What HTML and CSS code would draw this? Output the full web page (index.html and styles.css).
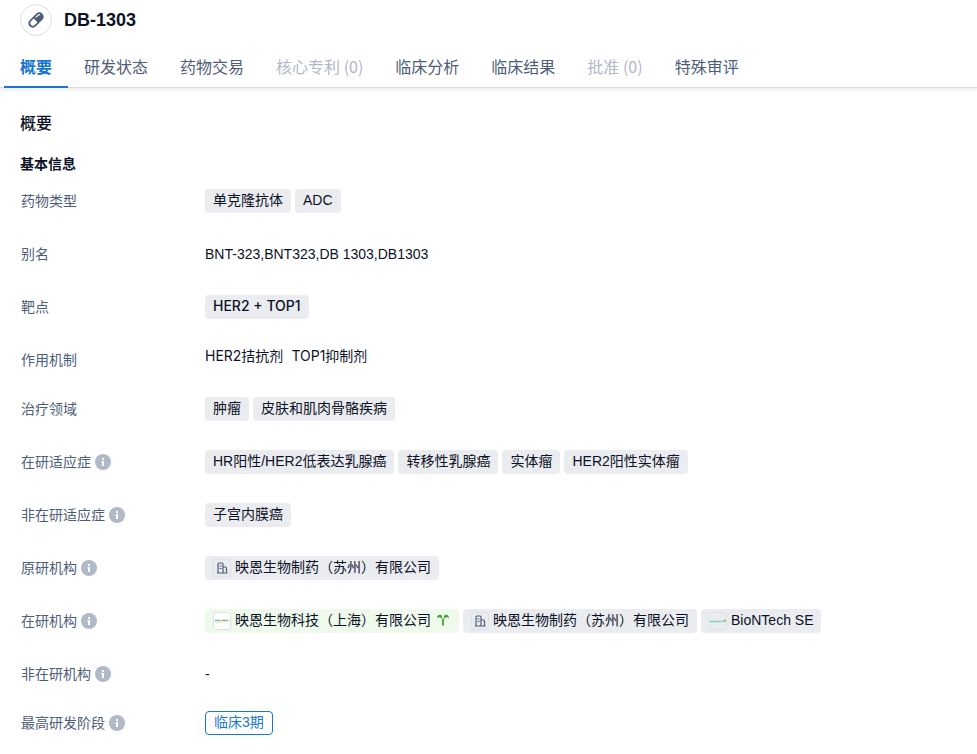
FILE: index.html
```html
<!DOCTYPE html>
<html lang="zh-CN">
<head>
  <meta charset="UTF-8">
  <meta name="viewport" content="width=device-width, initial-scale=1.0">
  <title>DB-1303</title>
  <link rel="stylesheet" href="styles.css">
</head>
<body>
  <svg class="sprite" aria-hidden="true">
    <symbol id="icon-info" viewBox="0 0 16 16">
      <circle cx="8" cy="8" r="8" fill="#b1b8c7"/>
      <path d="M7 4h2v2H7zM6.500 7H9v5H7V8.500h-.5z" fill="#fff"/>
    </symbol>
    <symbol id="icon-building" viewBox="0 0 16 16">
      <path d="M4 13V4q0-1 1-1h3q1 0 1 1v9M9 7h2.500q1 0 1 1v5M3 13h10.500" fill="none" stroke="#4e5d78" stroke-width="1.200"/>
      <path d="M5.500 6h2M5.500 8.500h2" stroke="#4e5d78"/>
    </symbol>
  </svg>

  <header class="header">
    <span class="avatar">
      <svg width="18" height="18" viewBox="0 0 18 18">
        <g transform="rotate(-45 9 9)">
          <rect x="0" y="4.600" width="18" height="8.800" rx="4.400" fill="#4e5d78"/>
          <path d="M8.400 6.400H4.600a2.600 2.600 0 0 0 0 5.200h3.800z" fill="#fff"/>
          <path d="M11 7h2.600q1.200 0 1.900 1" fill="none" stroke="#fff" stroke-width="1.100" stroke-linecap="round"/>
        </g>
      </svg>
    </span>
    <h1>DB-1303</h1>
  </header>

  <nav class="tabs">
    <a href="#overview" class="tab active">概要</a>
    <a href="#status" class="tab">研发状态</a>
    <a href="#deals" class="tab">药物交易</a>
    <a href="#patents" class="tab disabled">核心专利 (0)</a>
    <a href="#analysis" class="tab">临床分析</a>
    <a href="#results" class="tab">临床结果</a>
    <a href="#approval" class="tab disabled">批准 (0)</a>
    <a href="#review" class="tab">特殊审评</a>
  </nav>

  <main class="content" id="overview">
    <h2>概要</h2>
    <h3>基本信息</h3>

    <dl class="info">
      <div class="row">
        <dt>药物类型</dt>
        <dd class="tags"><span class="tag">单克隆抗体</span><span class="tag">ADC</span></dd>
      </div>
      <div class="row">
        <dt>别名</dt>
        <dd class="alias">BNT-323,BNT323,DB 1303,DB1303</dd>
      </div>
      <div class="row">
        <dt>靶点</dt>
        <dd class="tags"><a href="#target" class="tag target">HER2 + TOP1</a></dd>
      </div>
      <div class="row">
        <dt>作用机制</dt>
        <dd class="mechanism"><span>HER2拮抗剂</span><span>TOP1抑制剂</span></dd>
      </div>
      <div class="row">
        <dt>治疗领域</dt>
        <dd class="tags"><span class="tag">肿瘤</span><span class="tag">皮肤和肌肉骨骼疾病</span></dd>
      </div>
      <div class="row">
        <dt>在研适应症<svg class="info-icon"><use href="#icon-info"/></svg></dt>
        <dd class="tags">
          <a href="#disease" class="tag">HR阳性/HER2低表达乳腺癌</a>
          <a href="#disease" class="tag">转移性乳腺癌</a>
          <a href="#disease" class="tag">实体瘤</a>
          <a href="#disease" class="tag">HER2阳性实体瘤</a>
        </dd>
      </div>
      <div class="row">
        <dt>非在研适应症<svg class="info-icon"><use href="#icon-info"/></svg></dt>
        <dd class="tags"><a href="#disease" class="tag">子宫内膜癌</a></dd>
      </div>
      <div class="row">
        <dt>原研机构<svg class="info-icon"><use href="#icon-info"/></svg></dt>
        <dd class="tags">
          <a href="#org" class="tag"><span class="logo"><svg><use href="#icon-building"/></svg></span>映恩生物制药（苏州）有限公司</a>
        </dd>
      </div>
      <div class="row">
        <dt>在研机构<svg class="info-icon"><use href="#icon-info"/></svg></dt>
        <dd class="tags">
          <a href="#org" class="tag startup">
            <span class="logo white">
              <svg viewBox="0 0 16 16">
                <path d="M1 7.500h5M9 7.500h5.500" stroke="#62b583" stroke-width="1.500" stroke-dasharray="2.200 .3"/>
                <path d="M6.200 7.500h2.600" stroke="#d9b36a" stroke-width="1.500"/>
                <path d="M1.500 9.700h7" stroke="#c5cacf" stroke-width=".8" stroke-dasharray="1 .6"/>
              </svg>
            </span>映恩生物科技（上海）有限公司
            <svg class="sprout" viewBox="0 0 12 12">
              <path d="M6 11.500V5" stroke="#3da32b" stroke-width="1.800"/>
              <path d="M5.200 6Q5.800 .6 2.600 .8Q.3 1 0 4.200Q1.500 2.900 3 3.300Q4.600 3.700 5.200 6zM6.800 6Q6.200 .6 9.400 .8Q11.700 1 12 4.200Q10.500 2.900 9 3.300Q7.400 3.700 6.800 6z" fill="#3da32b"/>
            </svg>
          </a>
          <a href="#org" class="tag"><span class="logo"><svg><use href="#icon-building"/></svg></span>映恩生物制药（苏州）有限公司</a>
          <a href="#org" class="tag">
            <span class="logo">
              <svg viewBox="0 0 16 16">
                <path d="M0 8.500h13.500" stroke="#79cdb4" stroke-width="1.500" stroke-dasharray="1.800 .3"/>
                <path d="M13.500 6.500h2.500v2.500h-2.500z" fill="#8fd45c"/>
              </svg>
            </span>BioNTech SE
          </a>
        </dd>
      </div>
      <div class="row">
        <dt>非在研机构<svg class="info-icon"><use href="#icon-info"/></svg></dt>
        <dd>-</dd>
      </div>
      <div class="row">
        <dt>最高研发阶段<svg class="info-icon"><use href="#icon-info"/></svg></dt>
        <dd class="tags"><span class="tag phase">临床3期</span></dd>
      </div>
    </dl>
  </main>
</body>
</html>
```

FILE: styles.css
```css
* {
  margin: 0;
  padding: 0;
  box-sizing: border-box;
}

body {
  background-color: #fff;
  color: #0c1226;
  font-family: "Liberation Sans", "Noto Sans CJK SC", sans-serif;
  font-size: 14px;
  line-height: 24px;
}

a {
  color: inherit;
  text-decoration: none;
}

.sprite {
  display: none;
}

.header {
  display: flex;
  align-items: center;
  gap: 12px;
  padding: 4px 20px 0;
}

.avatar {
  display: flex;
  align-items: center;
  justify-content: center;
  width: 32px;
  height: 32px;
  border: 1px solid #dcdfe8;
  border-radius: 50%;
}

.header h1 {
  font-size: 18px;
  line-height: 32px;
}

.tabs {
  display: flex;
  padding: 12px 4px 0;
  border-bottom: 1px solid #dedede;
  box-shadow: 0 2px 4px rgba(0, 0, 0, 0.08);
  font-family: "Noto Sans CJK SC", sans-serif;
}

.tab {
  height: 40px;
  margin-bottom: -1px;
  padding: 0 16px;
  border-bottom: 2px solid transparent;
  color: #4e5d78;
  font-size: 16px;
  line-height: 36px;
  white-space: nowrap;
}

.tab.active {
  border-bottom-color: #1976d2;
  color: #1976d2;
  font-weight: bold;
}

.tab.disabled {
  color: #b1b8c7;
}

.content {
  padding: 24px 20px;
}

.content h2 {
  font-size: 16px;
  font-weight: 500;
  line-height: 24px;
}

.content h3 {
  margin-top: 16px;
  font-size: 14px;
  line-height: 24px;
}

.info {
  display: flex;
  flex-direction: column;
  gap: 25px;
  margin-top: 13px;
}

.row {
  display: grid;
  grid-template-columns: 184px 1fr;
  padding-left: 1px;
}

.row dt {
  display: flex;
  align-items: center;
  gap: 4px;
  height: 24px;
  color: #4e5d78;
}

.info-icon {
  width: 16px;
  height: 16px;
}

.tags {
  display: flex;
  flex-wrap: wrap;
  gap: 4px;
  padding-bottom: 4px;
}

.tag {
  display: flex;
  align-items: flex-start;
  height: 24px;
  padding: 0 8px;
  border-radius: 4px;
  background-color: #ebecf0;
  line-height: 22px;
  white-space: nowrap;
}

.alias {
  padding-bottom: 4px;
}

.target,
.mechanism {
  font-family: Inter, "Noto Sans CJK SC", sans-serif;
}

.target {
  font-weight: 500;
}

.mechanism {
  display: flex;
  gap: 8px;
  line-height: 16px;
}

.logo {
  display: flex;
  width: 18px;
  height: 18px;
  margin: 3px 4px 0 0;
  border: 1px solid #dfe1e8;
  border-radius: 3px;
}

.logo.white {
  background-color: #fff;
}

.logo svg {
  width: 16px;
  height: 16px;
}

.tag.startup {
  background-color: #eff9ec;
}

.sprout {
  width: 12px;
  height: 12px;
  margin: 5px 2px 0 6px;
}

.tag.phase {
  border: 1px solid #1976d2;
  background-color: #fff;
  color: #1976d2;
  line-height: 20px;
}
```
